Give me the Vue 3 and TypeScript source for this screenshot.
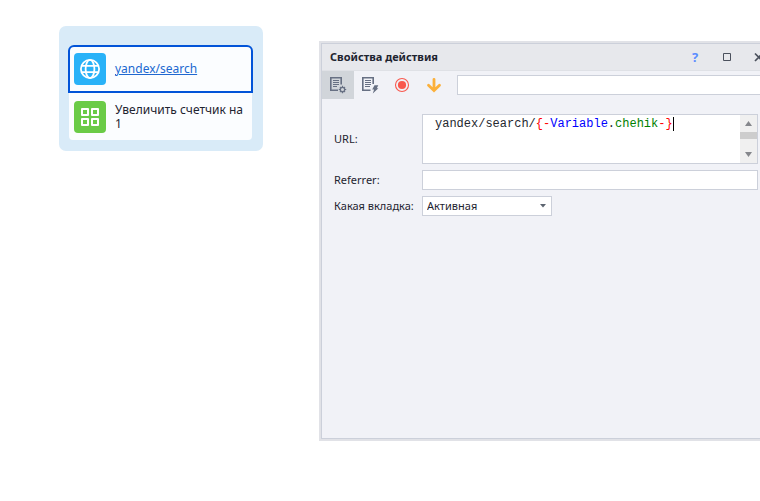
<script setup lang="ts">
import { ref, computed } from 'vue'

interface Token {
  text: string
  kind: 'plain' | 'brace' | 'scope' | 'name'
}

const url = ref('yandex/search/{-Variable.chehik-}')
const referrer = ref('')
const tab = ref('Активная')
const query = ref('')

// Splits the URL into plain text and {-Scope.name-} macros
const tokens = computed<Token[]>(() => {
  const out: Token[] = []
  const macro = /\{-(\w+)\.(\w+)-\}/g
  let last = 0
  for (const m of url.value.matchAll(macro)) {
    out.push({ text: url.value.slice(last, m.index), kind: 'plain' })
    out.push({ text: '{-', kind: 'brace' })
    out.push({ text: m[1], kind: 'scope' })
    out.push({ text: '.', kind: 'plain' })
    out.push({ text: m[2], kind: 'name' })
    out.push({ text: '-}', kind: 'brace' })
    last = (m.index ?? 0) + m[0].length
  }
  out.push({ text: url.value.slice(last), kind: 'plain' })
  return out.filter((t) => t.text.length > 0)
})
</script>

<template>
  <main class="workspace">
    <section class="group">
      <div class="action selected">
        <span class="tile web">
          <svg width="22" height="22" viewBox="0 0 22 22" fill="none" stroke="#fff" stroke-width="1.8">
            <circle cx="11" cy="11" r="9.1" />
            <ellipse cx="11" cy="11" rx="4.4" ry="9.1" />
            <path d="M3 7.8h16M3 14.2h16" />
          </svg>
        </span>
        <a class="label" href="#">yandex/search</a>
      </div>
      <div class="action">
        <span class="tile data">
          <svg width="22" height="22" viewBox="0 0 22 22" fill="none" stroke="#fff" stroke-width="2" stroke-linejoin="round">
            <path d="M3 3h6v6h-6zM13 3h6v6h-6zM3 13h6v6h-6zM13 13h6v6h-6z" />
          </svg>
        </span>
        <span class="label">Увеличить счетчик на 1</span>
      </div>
    </section>

    <section class="window">
      <div class="frame">
        <header class="titlebar">
          <h1>Свойства действия</h1>
          <button class="help" type="button" aria-label="Справка">
            <span>?</span>
          </button>
          <button type="button" aria-label="Развернуть">
            <svg width="10" height="10" viewBox="0 0 10 10" fill="none" stroke="#4b515d"><path d="M1.5 1.5h7v7h-7z" /></svg>
          </button>
          <button type="button" aria-label="Закрыть">
            <svg width="10" height="10" viewBox="0 0 10 10" fill="none" stroke="#4b515d" stroke-width="1.7"><path d="M1 1.5l7.5 7.5M8.5 1.5L1 9" /></svg>
          </button>
        </header>

        <div class="toolbar">
          <button class="tool active" type="button" aria-label="Свойства">
            <svg width="18" height="18" viewBox="0 0 18 18" fill="none" stroke="#677083">
              <path d="M9 14.2H1.8V1.8h10.4V8.5" stroke-width="1.6" />
              <path d="M4 4.5h6M4 6.5h6M4 8.5h6M4 10.5h4" />
              <circle cx="13.5" cy="13.5" r="2.2" stroke-width="1.3" />
              <path d="M13.5 9.8v1.4M13.5 15.8v1.4M9.8 13.5h1.4M15.8 13.5h1.4M11 11l.8.8M15.2 15.2l.8.8M16 11l-.8.8M11.8 15.2l-.8.8" stroke-width="1.2" />
            </svg>
          </button>
          <button class="tool" type="button" aria-label="Дополнительно">
            <svg width="18" height="18" viewBox="0 0 18 18" fill="none" stroke="#677083">
              <path d="M9.5 14.2H1.8V1.8h10.4V8" stroke-width="1.6" />
              <path d="M4 4.5h6M4 6.5h6M4 8.5h6M4 10.5h5" />
              <path d="M13.5 9.3h3.8l-1.5 2.9h1.6l-5.6 5.2 1.3-3.8h-1.9z" fill="#677083" stroke="none" />
            </svg>
          </button>
          <button class="tool" type="button" aria-label="Запись">
            <svg width="16" height="16" viewBox="0 0 16 16">
              <circle cx="8" cy="8" r="6.5" fill="none" stroke="#f9584e" stroke-width="1.1" />
              <circle cx="8" cy="8" r="4.1" fill="#f9584e" />
            </svg>
          </button>
          <button class="tool" type="button" aria-label="Вниз">
            <svg width="16" height="16" viewBox="0 0 16 16" fill="none" stroke="#fbb03b" stroke-width="2.8" stroke-linecap="round">
              <path d="M8 2.3v11M2.5 8.2L8 13.5l5.5-5.3" />
            </svg>
          </button>
          <input v-model="query" class="query" type="text" aria-label="Поиск" />
        </div>

        <form class="form" @submit.prevent>
          <label for="url">URL:</label>
          <div class="editor">
            <div class="code">
              <div class="highlight" aria-hidden="true"><span v-for="(t, i) in tokens" :key="i" :class="t.kind">{{ t.text }}</span><i class="caret"></i></div>
              <textarea id="url" v-model="url" spellcheck="false"></textarea>
            </div>
            <div class="scroll">
              <button type="button" aria-label="Прокрутить вверх">
                <svg width="7" height="5" viewBox="0 0 7 5"><path d="M3.5 0L7 5H0z" fill="#85878c" /></svg>
              </button>
              <span class="thumb"></span>
              <button class="down" type="button" aria-label="Прокрутить вниз">
                <svg width="7" height="5" viewBox="0 0 7 5"><path d="M0 0h7L3.5 5z" fill="#85878c" /></svg>
              </button>
            </div>
          </div>

          <label for="referrer">Referrer:</label>
          <input id="referrer" v-model="referrer" type="text" />

          <label for="tab">Какая вкладка:</label>
          <div class="select">
            <select id="tab" v-model="tab">
              <option>Активная</option>
            </select>
            <svg width="6" height="4" viewBox="0 0 6 4"><path d="M0 0h6L3 3.5z" fill="#5c6470" /></svg>
          </div>
        </form>
      </div>
    </section>
  </main>
</template>

<style>
body {
  background: #fff;
  overflow: hidden;
}
</style>

<style scoped>
* {
  box-sizing: border-box;
}

.workspace {
  display: flex;
  align-items: flex-start;
  gap: 56px;
  padding: 26px 0 60px 59px;
  font-family: "Noto Sans", "Open Sans", sans-serif;
  font-size: 12px;
  color: #1e2430;
}

button {
  display: flex;
  align-items: center;
  justify-content: center;
  padding: 0;
  border: 0;
  background: none;
}

.group {
  flex: none;
  width: 204px;
  padding: 19px 10px 11px 9px;
  border-radius: 7px;
  background: #d9ebf8;
}

.action {
  display: flex;
  align-items: center;
  gap: 9px;
  height: 47px;
  margin: 0 1px;
  padding: 0 5px;
  border-radius: 0 0 4px 4px;
  background: #fbfdff;
}

.action.selected {
  height: 48px;
  margin: 0;
  padding: 0 4px;
  border: 2px solid #0254d8;
  border-radius: 6px 6px 0 0;
}

.tile {
  display: flex;
  flex: none;
  align-items: center;
  justify-content: center;
  width: 32px;
  height: 32px;
  border-radius: 4px;
}

.web {
  background: #29b2f8;
}

.data {
  background: #6acb47;
}

.label {
  line-height: 14px;
}

a.label {
  color: #2068d0;
  text-decoration: underline;
}

.window {
  flex: 1;
  min-width: 0;
  margin-top: 15px;
  margin-right: -18px;
  padding: 2px;
  background: #e1e2e7;
}

.frame {
  min-height: 396px;
  border: 1px solid #ccd0da;
  background: #f1f2f7;
}

.titlebar {
  display: flex;
  align-items: center;
  height: 27px;
  padding-left: 8px;
  border-bottom: 1px solid #dfe1e6;
  background: #e7e8ec;
}

.titlebar h1 {
  flex: 1;
  margin: 0;
  font-size: 11px;
  font-weight: 700;
  line-height: 16px;
}

.titlebar button {
  width: 32px;
  height: 26px;
}

.titlebar .help {
  color: #5a8cff;
  font: 700 13px "Noto Sans", sans-serif;
}

.toolbar {
  display: flex;
  align-items: center;
  height: 28px;
}

.tool {
  width: 32px;
  height: 28px;
}

.tool.active {
  background: #d1d5da;
}

input,
.editor,
select {
  border: 1px solid #ccd0da;
  border-radius: 0;
  outline: none;
  background: #fff;
  color: #1e2430;
  font: 11px "Noto Sans", "Open Sans", sans-serif;
}

.query {
  flex: 1;
  height: 20px;
  min-width: 0;
  margin-left: 7px;
}

.form {
  display: grid;
  grid-template-columns: 88px 1fr;
  align-items: center;
  row-gap: 6px;
  padding: 15px 17px 15px 12px;
  font-size: 11px;
}

.form label {
  line-height: 16px;
  white-space: nowrap;
}

.form input {
  width: 100%;
  height: 20px;
}

.editor {
  display: flex;
  height: 50px;
}

.code {
  position: relative;
  flex: 1;
}

.highlight,
.code textarea {
  padding: 2px 0 0 12px;
  font: 12px/14px "Liberation Mono", monospace;
  white-space: pre-wrap;
}

.highlight {
  display: flex;
  color: #24282f;
}

.code textarea {
  position: absolute;
  inset: 0;
  width: 100%;
  height: 100%;
  border: 0;
  outline: none;
  resize: none;
  overflow: hidden;
  background: transparent;
  color: transparent;
}

.brace {
  color: #f00;
}

.scope {
  color: #00f;
}

.name {
  color: #008000;
}

.caret {
  width: 1px;
  height: 14px;
  background: #000;
}

.scroll {
  display: flex;
  flex-direction: column;
  width: 17px;
  background: #f0f0f0;
}

.scroll button {
  width: 17px;
  height: 17px;
}

.scroll .down {
  margin-top: auto;
}

.thumb {
  height: 7px;
  background: #cdcdcd;
}

.select {
  display: grid;
  align-items: center;
  width: 130px;
}

.select select {
  grid-area: 1 / 1;
  width: 100%;
  height: 20px;
  padding: 0 4px 2px;
  appearance: none;
}

.select svg {
  grid-area: 1 / 1;
  justify-self: end;
  margin-right: 6px;
  pointer-events: none;
}
</style>
